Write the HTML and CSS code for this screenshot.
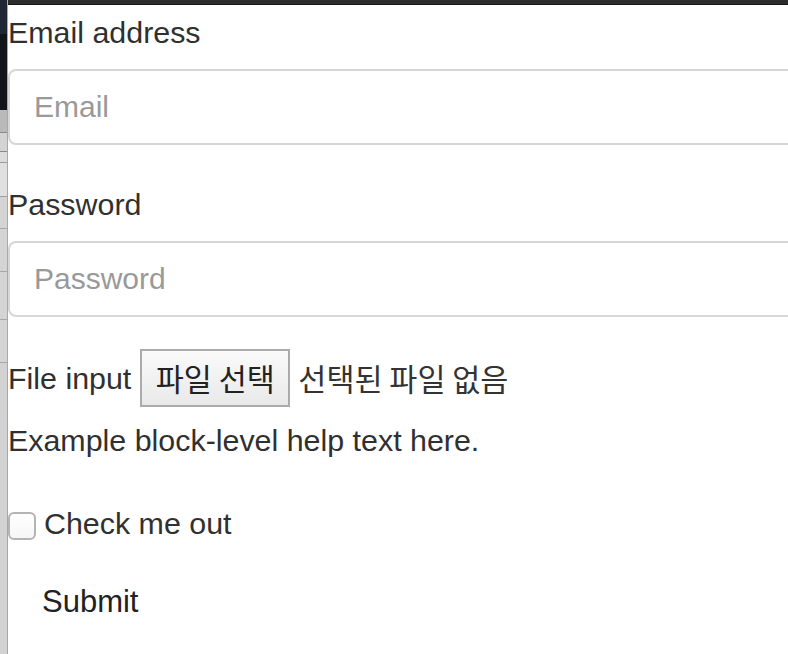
FILE: index.html
```html
<!DOCTYPE html>
<html lang="en">
<head>
<meta charset="utf-8">
<title>Form</title>
<link rel="stylesheet" href="styles.css">
</head>
<body>
<div class="screen">
  <div class="strip"></div>
  <div class="window">
    <div class="topbar"></div>
    <form class="form">
      <div class="group">
        <label class="label" for="email">Email address</label>
        <input class="control" id="email" type="email" placeholder="Email">
      </div>
      <div class="group">
        <label class="label" for="pw">Password</label>
        <input class="control" id="pw" type="password" placeholder="Password">
      </div>
      <div class="group file-group">
        <div class="file-row">
          <span class="file-label">File input</span>
          <span class="file-btn">파일 선택</span>
          <span class="file-name">선택된 파일 없음</span>
        </div>
        <p class="help">Example block-level help text here.</p>
      </div>
      <div class="check-row">
        <span class="checkbox"></span>
        <span class="check-label">Check me out</span>
      </div>
      <button class="submit" type="button">Submit</button>
    </form>
  </div>
</div>
</body>
</html>
```
FILE: styles.css
```css
html, body {
  margin: 0;
  padding: 0;
  background: #ffffff;
  overflow: hidden;
}
.screen {
  display: flex;
  width: 788px;
  height: 654px;
}
.strip {
  width: 8px;
  flex: none;
  background:
    linear-gradient(to left, #a8a8a8 0 1px, transparent 1px),
    linear-gradient(to bottom,
      #1f2634 0, #1f2634 34px,
      #12161b 34px, #12161b 110px,
      #b9b9b9 110px, #b9b9b9 132px,
      #8a8a8a 132px, #8a8a8a 133px,
      #d3d3d3 133px, #d3d3d3 151px,
      #8a8a8a 151px, #8a8a8a 152px,
      #dcdcdc 152px, #dcdcdc 162px,
      #9a9a9a 162px, #9a9a9a 163px,
      #e0e0e0 163px, #e0e0e0 196px,
      #a0a0a0 196px, #a0a0a0 197px,
      #d4d4d4 197px, #d4d4d4 228px,
      #a8a8a8 228px, #a8a8a8 229px,
      #d4d4d4 229px, #d4d4d4 271px,
      #a8a8a8 271px, #a8a8a8 272px,
      #d4d4d4 272px, #d4d4d4 319px,
      #a8a8a8 319px, #a8a8a8 320px,
      #d4d4d4 320px, #d4d4d4 362px,
      #a8a8a8 362px, #a8a8a8 363px,
      #d2d2d2 363px, #d2d2d2 100%);
}
.window {
  flex: 1;
  display: flex;
  flex-direction: column;
  overflow: hidden;
  min-width: 0;
}
.topbar {
  height: 5px;
  flex: none;
  background: #2c2c2c;
  border-bottom: 1px solid #161616;
  box-sizing: border-box;
}
.form {
  width: 1000px;
  margin: 0;
  font-family: "Liberation Sans", Arial, sans-serif;
  font-size: 30.4px;
  line-height: 48px;
  color: #303030;
}
.group {
  margin-bottom: 32px;
}
.label {
  display: block;
  padding-top: 3px;
  margin-bottom: 13px;
}
.control {
  display: block;
  box-sizing: border-box;
  width: 100%;
  height: 76px;
  margin: 0;
  padding: 0 24px;
  border: 2px solid #d6d6d6;
  border-radius: 8px;
  font-family: inherit;
  font-size: 30px;
  color: #333333;
  background: #ffffff;
  outline: none;
}
.control::placeholder {
  color: #999999;
  opacity: 1;
}
.file-row {
  display: flex;
  align-items: center;
  height: 58px;
  margin-top: 1px;
}
.file-label {
  margin-right: 9px;
}
.file-btn {
  box-sizing: border-box;
  height: 58px;
  width: 150px;
  display: flex;
  align-items: center;
  justify-content: center;
  border: 2px solid #ababab;
  background: linear-gradient(#fafafa, #e9e9e9);
  font-family: "Noto Sans CJK KR", sans-serif;
  font-size: 30.5px;
  line-height: 1;
  color: #222222;
  margin-right: 8px;
}
.file-name {
  font-family: "Noto Sans CJK KR", sans-serif;
  font-size: 30.5px;
  color: #333333;
}
.help {
  margin: 9px 0 0;
}
.check-row {
  display: flex;
  align-items: center;
  gap: 8px;
  height: 48px;
  padding-top: 3px;
}
.checkbox {
  box-sizing: border-box;
  width: 28px;
  height: 28px;
  border: 2px solid #b4b4b4;
  border-radius: 6px;
  background: linear-gradient(#ffffff, #f6f6f6);
  margin-top: 6px;
}
.submit {
  display: block;
  margin: 19px 0 0;
  padding: 12px 34px;
  border: none;
  background: transparent;
  font-family: inherit;
  font-size: 31px;
  line-height: 48px;
  color: #222222;
}
```
